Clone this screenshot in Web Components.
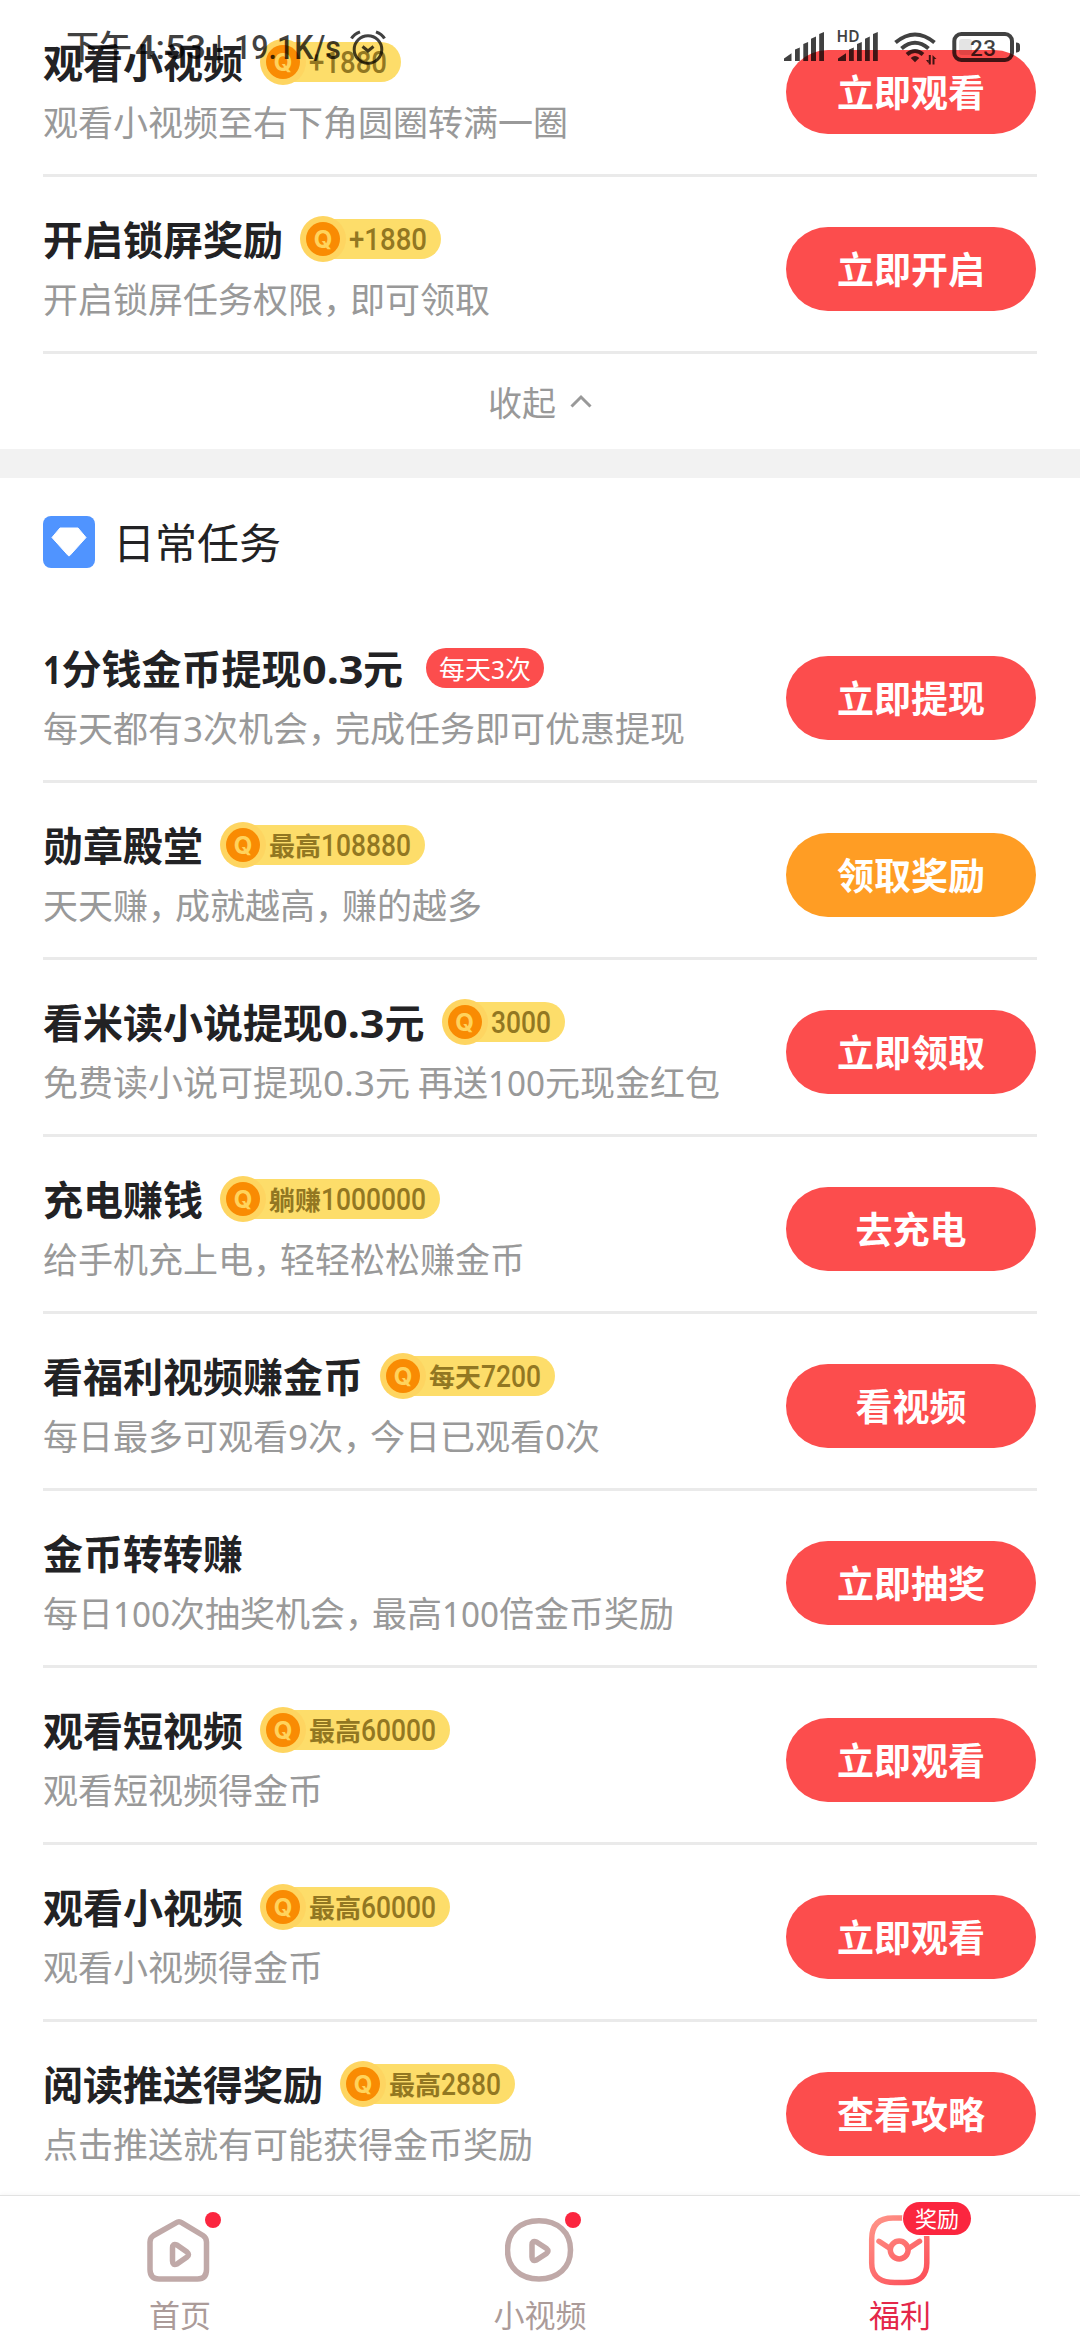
<!DOCTYPE html>
<html lang="zh-CN">
<head>
<meta charset="utf-8">
<title>福利</title>
<style>
  html, body { margin: 0; padding: 0; background: #fff; }
  body { width: 1080px; height: 2340px; overflow: hidden; }
</style>
</head>
<body>
<welfare-page></welfare-page>
<script>
const CJK = '"Noto Sans CJK SC", sans-serif';

function define(name, html, init) {
  const tpl = document.createElement('template');
  tpl.innerHTML = html;
  customElements.define(name, class extends HTMLElement {
    connectedCallback() {
      if (this.shadowRoot) return;
      this.attachShadow({ mode: 'open' }).appendChild(tpl.content.cloneNode(true));
      if (init) init(this, this.shadowRoot);
    }
  });
}

/* A run of Latin text squeezed or widened to an exact advance width. */
define('text-run', `
<style>
  :host { display: inline-block; line-height: 0; white-space: pre; vertical-align: baseline; }
  span { display: inline-block; transform-origin: 0 50%; line-height: 0; }
</style><span></span>`, (el, root) => {
  const s = root.querySelector('span');
  s.textContent = el.getAttribute('text');
  const w = parseFloat(el.getAttribute('width'));
  const natural = s.getBoundingClientRect().width;
  el.style.width = w + 'px';
  if (natural) {
    s.style.transform = `scaleX(${w / natural})`;
    s.style.marginRight = (w - natural) + 'px';
  }
});

/* Splits mixed text into CJK text and fitted Latin runs. */
function fill(target, text, widths) {
  target.textContent = '';
  for (const part of text.match(/[0-9.+ ]+|,|，|[^0-9.+ ，]+/g) || []) {
    if (/^[0-9.+ ]+$/.test(part)) {
      const run = document.createElement('text-run');
      run.className = 'n';
      let w = 0;
      for (const c of part) w += widths[c] ?? widths.d;
      run.setAttribute('text', part);
      run.setAttribute('width', w);
      target.appendChild(run);
    } else {
      const span = document.createElement('span');
      if (part === '，') span.className = 'comma';
      span.textContent = part;
      target.appendChild(span);
    }
  }
}

define('coin-badge', `
<style>
  :host { display: flex; align-items: center; height: 46px; }
  .pill { display: flex; align-items: center; height: 40px; margin-left: -26px; padding: 0 14px 0 29px;
    border-radius: 0 20px 20px 0; background: #fddd6a; }
  .txt { font: 700 26px/40px ${CJK}; color: #927722; white-space: nowrap; height: 40px; }
  .n { font-family: Roboto, sans-serif; font-size: 31px; font-weight: 500; }
  .coin { position: relative; z-index: 1; width: 46px; height: 46px; border-radius: 50%; background: #fed561;
    display: flex; align-items: center; justify-content: center; }
  .core { width: 34px; height: 34px; border-radius: 50%; background: #f98b03; color: #ffd35c;
    font: 700 24px/35px Inter, sans-serif; text-align: center; }
</style>
<span class="coin"><span class="core">Q</span></span>
<span class="pill"><span class="txt"></span></span>`, (el, root) => {
  fill(root.querySelector('.txt'), el.getAttribute('text'), { d: 15, '+': 18 });
});

define('count-badge', `
<style>
  :host { display: flex; align-items: center; height: 40px; padding: 0 13px; margin-left: 6px; border-radius: 20px;
    background: #fc4d4d; }
  .txt { font: 400 26px/38px ${CJK}; color: #fff; white-space: nowrap; height: 38px; }
  .n { font-family: "Noto Sans", sans-serif; }
</style>
<span class="txt"></span>`, (el, root) => {
  fill(root.querySelector('.txt'), el.getAttribute('text'), { d: 14 });
});

define('pill-button', `
<style>
  :host { display: flex; align-items: center; justify-content: center; box-sizing: border-box; width: 250px; height: 84px;
    padding-bottom: 2px; border-radius: 42px; background: #fc4d4d; color: #fff; font: 700 37px/80px ${CJK}; white-space: nowrap; }
  :host([tone="gold"]) { background: #ff9d24; }
</style><slot></slot>`);

define('task-row', `
<style>
  :host { display: flex; justify-content: space-between; height: 174px; margin: 0 43px; border-bottom: 3px solid #eaeaea; }
  :host([last]) { border-bottom: none; height: 173px; }
  .info { display: flex; flex-direction: column; padding: 31px 0 0 0; }
  .head { display: flex; align-items: center; gap: 17px; height: 62px; }
  .title { font: 700 40px/60px ${CJK}; color: #222224; white-space: nowrap; height: 62px; }
  .title .n { font-family: "Noto Sans", sans-serif; }
  .desc { font: 400 35px/50px ${CJK}; color: #999; white-space: nowrap; height: 50px; margin-top: 3px; }
  .desc .n { font-family: "Noto Sans", sans-serif; }
  .comma { letter-spacing: -8px; }
  .act { padding: 50px 1px 0 0; }
</style>
<div class="info">
  <div class="head"><span class="title"></span><slot name="badge"></slot></div>
  <div class="desc"></div>
</div>
<div class="act"><slot></slot></div>`, (el, root) => {
  fill(root.querySelector('.title'), el.getAttribute('name'), { d: 24.5, '1': 18.5, '.': 12.5 });
  fill(root.querySelector('.desc'), el.getAttribute('desc'), { d: 20, '1': 17, '.': 12, ' ': 8 });
});

define('collapse-link', `
<style>
  :host { display: flex; justify-content: center; align-items: center; height: 95px; gap: 14px; color: #999;
    font: 400 34px/95px ${CJK}; }
  .t { height: 95px; } svg { display: block; margin-top: -1px; }
</style>
<span class="t">收起</span>
<svg width="22" height="14" viewBox="0 0 22 14" fill="none" stroke="#999" stroke-width="3"><path d="M1.5 12.5 11 3l9.500 9.500"/></svg>`);

define('section-head', `
<style>
  :host { display: flex; align-items: center; height: 128px; padding: 0 43px; gap: 18px; color: #222224;
    font: 400 42px/60px ${CJK}; }
  svg { display: block; margin-top: -1px; } span { margin-top: -3px; }
</style>
<svg width="52" height="52" viewBox="0 0 52 52"><rect width="52" height="52" rx="8" fill="#5094ff"/>
<path d="M17 12h18l8 9.500L26.800 39.500q-.8.8-1.600 0L9 21.500Z" fill="#fff" stroke="#fff" stroke-width="1" stroke-linejoin="round"/></svg>
<span><slot></slot></span>`);

define('status-bar', `
<style>
  :host { display: flex; justify-content: space-between; align-items: flex-start; position: absolute; z-index: 5;
    left: 0; top: 0; width: 1080px; height: 94px; box-sizing: border-box; padding: 0 60px 0 66px; opacity: .74; color: #000; }
  .left { display: flex; font: 500 33px/90px ${CJK}; height: 90px; }
  .left text-run { font-family: Roboto, sans-serif; font-weight: 500; font-size: 34px; }
  .left > * { display: block; white-space: nowrap; }
  svg { display: block; }
  .alarm { margin: 29px 0 0 8px; }
  .right { margin-top: 28px; }
</style>
<div class="left">
  <span style="width:69px">下午</span>
  <span style="width:80px"><text-run text="4:53" width="71"></text-run></span>
  <span style="width:19px"><text-run text="|" width="8"></text-run></span>
  <span style="width:107px"><text-run text="19.1K/s" width="107"></text-run></span>
  <svg class="alarm" width="38" height="36" viewBox="0 0 38 36" fill="none" stroke="#000" stroke-width="3">
    <circle cx="19" cy="20.500" r="13.800"/><path d="M2.500 9.500Q5 5 11 2.800M35.500 9.500Q33 5 27 2.800M13.500 17.500l5.500 4.500 5.500-4.500"/></svg>
</div>
<svg class="right" width="238" height="40" viewBox="782 28 238 40" fill="#000">
  <path d="M784 61v-2.500l7.500-5.200v7.700zM795 61V49.500l4.800-2V61zM803.300 61V44l4.800-2v19zM811 61V38.800l5-2.200V61zM819.200 61V34l4.800-2v29z"/>
  <path d="M838 61v-2.500l8-5.200v7.700zM849 61V49.500l4.800-2V61zM857 61V44l4.800-2v19zM865 61V38.800l4.800-2.200V61zM873 61V34l4.800-2v29z"/>
  <text x="836.500" y="42" font-family="Noto Sans, sans-serif" font-weight="600" font-size="15.500" textLength="23" lengthAdjust="spacingAndGlyphs">HD</text>
  <g fill="none" stroke="#000" stroke-width="4"><path d="M895.500 42.500Q915 26.500 934.500 42.500M901.500 48.500Q915 37 928.500 48.500M907 54.500Q915 47.500 923 54.500"/></g>
  <path d="M915 62.200l-4.300-4.200q4.300-4 8.600 0z"/>
  <path d="M928.800 55v9.500h2V55zM926 60h3v4zM932.500 55v9.500h2V59h2z"/>
  <rect x="954.300" y="34" width="57.700" height="26" rx="7" fill="none" stroke="#000" stroke-width="4"/>
  <rect x="959" y="39" width="13" height="16" rx="3" fill-opacity=".14"/>
  <path d="M1016 42.500q4 0 4 3v4q0 3-4 3z"/>
  <text x="970" y="55.700" font-family="Roboto, sans-serif" font-weight="500" font-size="22.500" textLength="26" lengthAdjust="spacing">23</text>
</svg>`);

define('tab-item', `
<style>
  :host { display: flex; flex-direction: column; align-items: center; flex: 1; color: #ab9b99; padding-top: 18px; }
  :host([active]) { color: #e4284a; }
  .icon { position: relative; width: 70px; height: 72px; }
  .label { font: 400 31px/40px ${CJK}; margin-top: 8px; }
  ::slotted(svg) { display: block; }
  .dot { position: absolute; left: 60px; top: -2px; width: 16px; height: 16px; border-radius: 50%; background: #fb263f; }
  .tag { position: absolute; left: 38px; top: -12px; width: 68px; height: 33px; border-radius: 17px; background: #fb263f;
    color: #fff; font: 400 22px/31px ${CJK}; text-align: center; box-shadow: 0 0 0 1px #fff; }
</style>
<div class="icon"><slot name="icon"></slot></div><div class="label"><slot></slot></div>`, (el, root) => {
  const add = (cls, txt) => {
    const n = document.createElement('span');
    n.className = cls; n.textContent = txt;
    root.querySelector('.icon').appendChild(n);
  };
  if (el.hasAttribute('dot')) add('dot', '');
  if (el.hasAttribute('tag')) add('tag', el.getAttribute('tag'));
});

define('tab-bar', `
<style>
  :host { display: flex; height: 144px; border-top: 1px solid #e2e2e2; background: #fff; box-shadow: 0 -1px 4px rgba(0,0,0,.04); }
</style><slot></slot>`);

define('welfare-page', `
<style>
  :host { display: flex; flex-direction: column; position: relative; width: 1080px; height: 2340px; overflow: hidden; background: #fff; }
  .band { height: 29px; background: #f2f2f2; }
  tab-bar { margin-top: auto; }
</style>
<status-bar></status-bar>
<task-row name="观看小视频" desc="观看小视频至右下角圆圈转满一圈"><coin-badge slot="badge" text="+1880"></coin-badge><pill-button>立即观看</pill-button></task-row>
<task-row name="开启锁屏奖励" desc="开启锁屏任务权限，即可领取"><coin-badge slot="badge" text="+1880"></coin-badge><pill-button>立即开启</pill-button></task-row>
<collapse-link></collapse-link>
<div class="band"></div>
<section-head>日常任务</section-head>
<task-row name="1分钱金币提现0.3元" desc="每天都有3次机会，完成任务即可优惠提现"><count-badge slot="badge" text="每天3次"></count-badge><pill-button>立即提现</pill-button></task-row>
<task-row name="勋章殿堂" desc="天天赚，成就越高，赚的越多"><coin-badge slot="badge" text="最高108880"></coin-badge><pill-button tone="gold">领取奖励</pill-button></task-row>
<task-row name="看米读小说提现0.3元" desc="免费读小说可提现0.3元 再送100元现金红包"><coin-badge slot="badge" text="3000"></coin-badge><pill-button>立即领取</pill-button></task-row>
<task-row name="充电赚钱" desc="给手机充上电，轻轻松松赚金币"><coin-badge slot="badge" text="躺赚1000000"></coin-badge><pill-button>去充电</pill-button></task-row>
<task-row name="看福利视频赚金币" desc="每日最多可观看9次，今日已观看0次"><coin-badge slot="badge" text="每天7200"></coin-badge><pill-button>看视频</pill-button></task-row>
<task-row name="金币转转赚" desc="每日100次抽奖机会，最高100倍金币奖励"><pill-button>立即抽奖</pill-button></task-row>
<task-row name="观看短视频" desc="观看短视频得金币"><coin-badge slot="badge" text="最高60000"></coin-badge><pill-button>立即观看</pill-button></task-row>
<task-row name="观看小视频" desc="观看小视频得金币"><coin-badge slot="badge" text="最高60000"></coin-badge><pill-button>立即观看</pill-button></task-row>
<task-row last name="阅读推送得奖励" desc="点击推送就有可能获得金币奖励"><coin-badge slot="badge" text="最高2880"></coin-badge><pill-button>查看攻略</pill-button></task-row>
<tab-bar>
  <tab-item dot>
    <svg slot="icon" width="70" height="72" viewBox="0 0 70 72" fill="none" stroke="#c0a9a8" stroke-width="5.500" stroke-linejoin="round">
      <path d="M31 8.800Q34 6.800 37 8.800L58 21.500Q61.500 23.800 61.500 28V55.500Q61.500 65 52.500 65H14Q5 65 5 55.500V28Q5 23.800 8.500 21.500Z"/>
      <path d="M27.500 34Q27.500 29 32 31L42 38Q45 40.500 42 43L32 50Q27.500 52 27.500 47Z"/></svg>
    首页</tab-item>
  <tab-item dot>
    <svg slot="icon" width="70" height="72" viewBox="0 0 70 72" fill="none" stroke="#c0a9a8" stroke-width="5.500" stroke-linejoin="round">
      <path d="M34 6.800C53 6.800 65.500 18.500 65.500 36S53 65 34 65 2.500 53.500 2.500 36 15 6.800 34 6.800Z"/>
      <path d="M27 31Q27 26 31.500 28L41.500 34.500Q44.500 37 41.500 39.500L31.500 46Q27 48 27 43Z"/></svg>
    小视频</tab-item>
  <tab-item active tag="奖励">
    <svg slot="icon" width="70" height="72" viewBox="0 0 70 72" fill="none" stroke="url(#g)" stroke-width="5.500" stroke-linecap="round">
      <defs><linearGradient id="g" gradientUnits="userSpaceOnUse" x1="8" y1="4" x2="60" y2="68"><stop offset="0" stop-color="#ff9488"/><stop offset="1" stop-color="#fc4e58"/></linearGradient></defs>
      <path d="M28 4H41C54.500 4 61.800 11 61.800 25V49C61.800 61 55 67.300 44 68.200Q34 69 25 68.200C14 67.300 6.700 61 6.700 49V25C6.700 11 14 4 28 4Z"/>
      <circle cx="34.200" cy="36" r="8.900"/><path d="M14 27.300 25 34.500M54.500 27.300 43.500 34.500"/></svg>
    福利</tab-item>
</tab-bar>`);
</script>
</body>
</html>
